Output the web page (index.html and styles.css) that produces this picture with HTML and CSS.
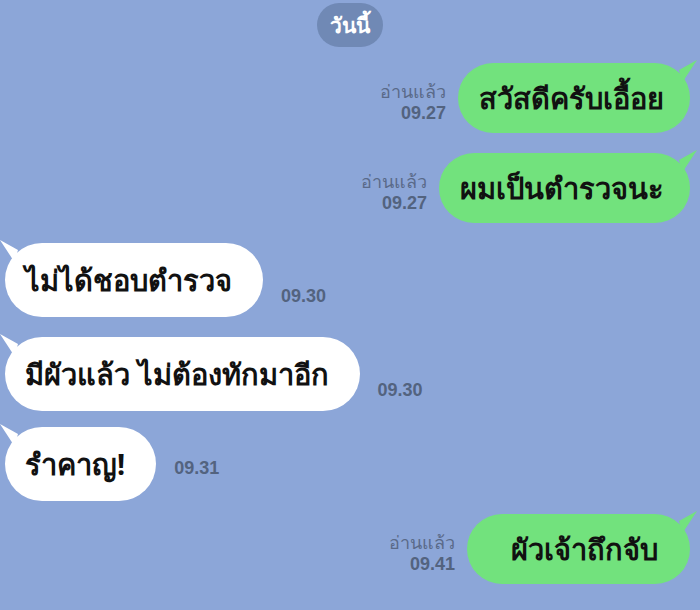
FILE: index.html
```html
<!DOCTYPE html>
<html>
<head>
    <meta charset="UTF-8">
    <meta name="viewport" content="width=device-width, initial-scale=1.0">
    <title>LINE Chat</title>
    <link rel="stylesheet" href="styles.css">
</head>
<body>
    <div class="chat">
        <div class="date">
            <span class="date-pill">วันนี้</span>
        </div>

        <div class="row row-out">
            <div class="meta">
                <span>อ่านแล้ว</span>
                <span class="time">09.27</span>
            </div>
            <div class="bubble bubble-out">สวัสดีครับเอื้อย</div>
        </div>

        <div class="row row-out">
            <div class="meta">
                <span>อ่านแล้ว</span>
                <span class="time">09.27</span>
            </div>
            <div class="bubble bubble-out">ผมเป็นตำรวจนะ</div>
        </div>

        <div class="row row-in">
            <div class="bubble bubble-in">ไม่ได้ชอบตำรวจ</div>
            <span class="time">09.30</span>
        </div>

        <div class="row row-in">
            <div class="bubble bubble-in">มีผัวแล้ว ไม่ต้องทักมาอีก</div>
            <span class="time">09.30</span>
        </div>

        <div class="row row-in row-short">
            <div class="bubble bubble-in">รำคาญ!</div>
            <span class="time">09.31</span>
        </div>

        <div class="row row-out row-last">
            <div class="meta">
                <span>อ่านแล้ว</span>
                <span class="time">09.41</span>
            </div>
            <div class="bubble bubble-out bubble-wide">ผัวเจ้าถึกจับ</div>
        </div>
    </div>
</body>
</html>
```

FILE: styles.css
```css
body {
    margin: 0;
    background-color: #8ca6d8;
    font-family: "Noto Sans", "DejaVu Sans", sans-serif;
    color: #111;
}
.chat {
    display: flex;
    flex-direction: column;
    gap: 20px;
    padding: 3px 10px 0 5px;
    height: 610px;
    box-sizing: border-box;
    overflow: hidden;
}
.date {
    display: flex;
    justify-content: center;
    margin-bottom: -4px;
    padding-left: 5px;
}
.date-pill {
    background-color: #7089b5;
    color: #fff;
    font-size: 21px;
    font-weight: bold;
    height: 44px;
    line-height: 44px;
    padding: 0 13px;
    border-radius: 22px;
}
.row {
    display: flex;
    align-items: flex-end;
}
.row-out {
    justify-content: flex-end;
}
.row-in {
    justify-content: flex-start;
}
.row-short {
    margin-top: -4px;
}
.row-last {
    margin-top: -7px;
}
.meta {
    display: flex;
    flex-direction: column;
    align-items: flex-end;
    margin: 0 12px 9px 0;
    font-size: 18px;
    color: #5a6a89;
    line-height: 22px;
}
.time {
    font-family: "Liberation Sans", Arial, sans-serif;
    font-weight: bold;
    font-size: 18px;
    color: #53637f;
}
.row-in .time {
    margin: 0 0 10px 18px;
}
.row-short .time {
    margin-bottom: 22px;
}
.bubble {
    position: relative;
    height: 70px;
    line-height: 70px;
    border-radius: 35px;
    padding: 0 26px 0 21px;
    font-size: 29px;
    font-weight: bold;
    white-space: nowrap;
}
.bubble-out {
    background-color: #72e27d;
}
.bubble-wide {
    padding: 0 32px 0 44px;
}
.bubble-in {
    background-color: #fff;
    height: 74px;
    line-height: 74px;
    border-radius: 37px;
    padding: 0 31px 0 20px;
}
.bubble::after {
    content: "";
    position: absolute;
    top: -3px;
    width: 18px;
    height: 22px;
    background-color: inherit;
}
.bubble-out::after {
    right: -7px;
    clip-path: polygon(100% 0, 20% 100%, 0 45%);
}
.bubble-in::after {
    left: -5px;
    clip-path: polygon(0 0, 100% 45%, 80% 100%);
}
```
